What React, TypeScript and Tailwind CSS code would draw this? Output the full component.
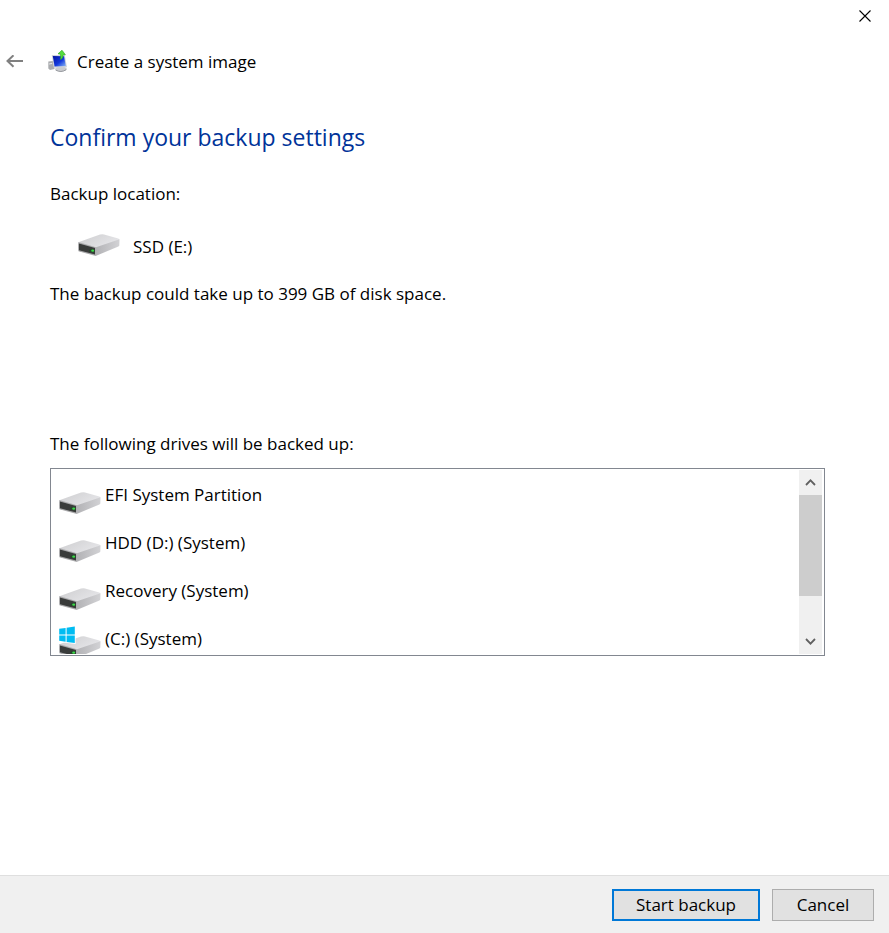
import { useRef } from "react";

const drives = [
    { name: "EFI System Partition", windows: false },
    { name: "HDD (D:) (System)", windows: false },
    { name: "Recovery (System)", windows: false },
    { name: "(C:) (System)", windows: true },
];

function DriveShape() {
    return (
        <>
            <defs>
                <linearGradient id="driveTop" x1="0" y1="0" x2="1" y2="0.6">
                    <stop offset="0" stopColor="#cdcdcf" />
                    <stop offset="1" stopColor="#e6e6e9" />
                </linearGradient>
                <linearGradient id="driveSide" x1="0" y1="0" x2="1" y2="0">
                    <stop offset="0" stopColor="#b2b2b5" />
                    <stop offset="1" stopColor="#d2d2d5" />
                </linearGradient>
            </defs>
            <path d="M0.3 8.2 L22 0.6 Q24 0 26 0.4 L40.3 4.4 Q41.6 4.9 41.2 5.9 L18 14 Z" fill="url(#driveTop)" />
            <path d="M17.3 13.4 L41.5 5.2 L41.3 11.4 Q41.2 12 40.4 12.4 L17.6 22 Z" fill="url(#driveSide)" />
            <path d="M0.3 8.1 L17.8 13.2 V22 L1.2 17.6 Q0.3 17.3 0.3 16.4 Z" fill="#a9a9ab" />
            <path d="M0.9 9.5 L17 13.9 V20.4 L0.9 16.2 Z" fill="#3a3c3b" />
            <path d="M11 16.2 L13 14.8 L16.5 15.4 V18.8 L11 17.4 Z" fill="#27452c" />
            <ellipse cx="14.7" cy="16.7" rx="1.5" ry="1.1" fill="#3bdc48" />
        </>
    );
}

function DriveIcon() {
    return (
        <svg width="42" height="22" viewBox="0 0 42 22" className="shrink-0" aria-hidden="true">
            <DriveShape />
        </svg>
    );
}

function VolumeIcon({ windows }: { windows: boolean }) {
    return (
        <svg width="42" height="32" viewBox="0 0 42 32" className="shrink-0" aria-hidden="true">
            <g transform="translate(0 10)">
                <DriveShape />
            </g>
            {windows && (
                <>
                    <path d="M0 1 H16.6 V18 L0 16 Z" fill="#fff" />
                    <path d="M0.2 2.8 L6.6 1.9 V8.4 H0.2 Z M7.6 1.7 L15.8 0.5 V8.4 H7.6 Z M0.2 9.4 H6.6 V15.7 L0.2 14.8 Z M7.6 9.4 H15.8 V17 L7.6 15.9 Z" fill="#00bcf2" />
                </>
            )}
        </svg>
    );
}

function BackupIcon() {
    return (
        <svg width="20" height="24" viewBox="0 0 20 24" className="shrink-0" aria-hidden="true">
            <defs>
                <linearGradient id="screen" x1="0" y1="0" x2="1" y2="1">
                    <stop offset="0" stopColor="#0414a0" />
                    <stop offset="0.55" stopColor="#1238dc" />
                    <stop offset="1" stopColor="#8ab8f7" />
                </linearGradient>
            </defs>
            <path d="M0.3 11.6 L4.8 11 L6.6 19 L2 20 L0.3 18.5 Z" fill="#a9abae" />
            <path d="M1 13.4 L4.2 12.8 V14 L1 14.6 Z" fill="#e2e3e5" />
            <ellipse cx="13" cy="19" rx="5.8" ry="2.6" fill="#c9cbcf" />
            <path d="M7.6 20 Q13 23.2 18.2 19.6" stroke="#96999e" fill="none" />
            <path d="M3.8 5 L16.8 5.2 L19 17.2 L5.8 17.8 Z" fill="#ced2da" />
            <path d="M4.8 6 L16 6.2 L17.8 16 L6.6 16.5 Z" fill="url(#screen)" />
            <path d="M12.4 9.6 Q15.2 8.6 15 5 L17.4 4.8 L14 0.2 L10 3.8 L12.4 4.2 Q13.2 7 12.4 9.6 Z" fill="#55dd3c" stroke="#2da51f" strokeWidth="0.6" />
        </svg>
    );
}

function Chevron({ down = false }: { down?: boolean }) {
    return (
        <svg width="11" height="8" viewBox="0 0 11 8" fill="none" stroke="#606060" strokeWidth="1.8" aria-hidden="true">
            <path d={down ? "M1 1 L5.5 5.6 L10 1" : "M1 6 L5.5 1.4 L10 6"} />
        </svg>
    );
}

export default function App() {
    const listRef = useRef<HTMLUListElement>(null);

    function scrollList(amount: number) {
        listRef.current?.scrollBy({ top: amount });
    }

    return (
        <div className="flex min-h-screen flex-col bg-white font-['Open_Sans','Noto_Sans',sans-serif] text-[17px] leading-6 text-black">
            <div className="flex h-8 justify-end">
                <button type="button" aria-label="Close" className="flex w-12 items-center justify-center">
                    <svg width="12" height="12" viewBox="0 0 12 12" fill="none" stroke="#000" strokeWidth="1.1" aria-hidden="true">
                        <path d="M0.5 0.5 L11.5 11.5 M11.5 0.5 L0.5 11.5" />
                    </svg>
                </button>
            </div>

            <header className="flex items-center pt-[18px]">
                <button type="button" aria-label="Back" className="flex w-12 items-center pl-1.5">
                    <svg width="18" height="14" viewBox="0 0 18 14" fill="none" stroke="#808080" strokeWidth="2" aria-hidden="true">
                        <path d="M17 6 H1.5 M7.5 0.3 L1.5 6 L7.5 11.7" />
                    </svg>
                </button>
                <BackupIcon />
                <span className="pl-[9px]">Create a system image</span>
            </header>

            <main className="flex-1 pr-16 pl-[50px]">
                <h1 className="mt-[45px] text-[23px] leading-9 text-[#003399]">Confirm your backup settings</h1>
                <p className="mt-[27px]">Backup location:</p>
                <div className="mt-7 flex items-center pl-7">
                    <div className="pb-1">
                        <DriveIcon />
                    </div>
                    <span className="pl-[13px]">SSD (E:)</span>
                </div>
                <p className="mt-[22px]">The backup could take up to 399 GB of disk space.</p>

                <p id="drives-label" className="mt-[126px]">
                    The following drives will be backed up:
                </p>
                <div className="mt-3 flex h-[188px] border border-[#828790] p-px pr-0.5">
                    <ul ref={listRef} aria-labelledby="drives-label" className="flex-1 overflow-hidden pl-[7px]">
                        {drives.map((drive) => (
                            <li key={drive.name} className="flex h-12 items-center gap-1">
                                <div className="pt-2">
                                    <VolumeIcon windows={drive.windows} />
                                </div>
                                <span className="pt-0.5">{drive.name}</span>
                            </li>
                        ))}
                    </ul>
                    <div className="flex w-[23px] flex-col bg-[#f0f0f0]">
                        <button type="button" aria-label="Scroll up" onClick={() => scrollList(-48)} className="flex h-[25px] items-center justify-center">
                            <Chevron />
                        </button>
                        <div className="flex-1">
                            <div className="h-[101px] bg-[#cdcdcd]" />
                        </div>
                        <button type="button" aria-label="Scroll down" onClick={() => scrollList(48)} className="flex h-[25px] items-center justify-center">
                            <Chevron down />
                        </button>
                    </div>
                </div>
            </main>

            <footer className="flex justify-end gap-3 border-t border-[#dfdfdf] bg-[#f0f0f0] pt-[13px] pr-[15px] pb-3">
                <button type="button" className="h-8 w-[148px] border-2 border-[#0078d7] bg-[#e1e1e1]">
                    Start backup
                </button>
                <button type="button" className="h-8 w-[102px] border border-[#adadad] bg-[#e1e1e1]">
                    Cancel
                </button>
            </footer>
        </div>
    );
}
